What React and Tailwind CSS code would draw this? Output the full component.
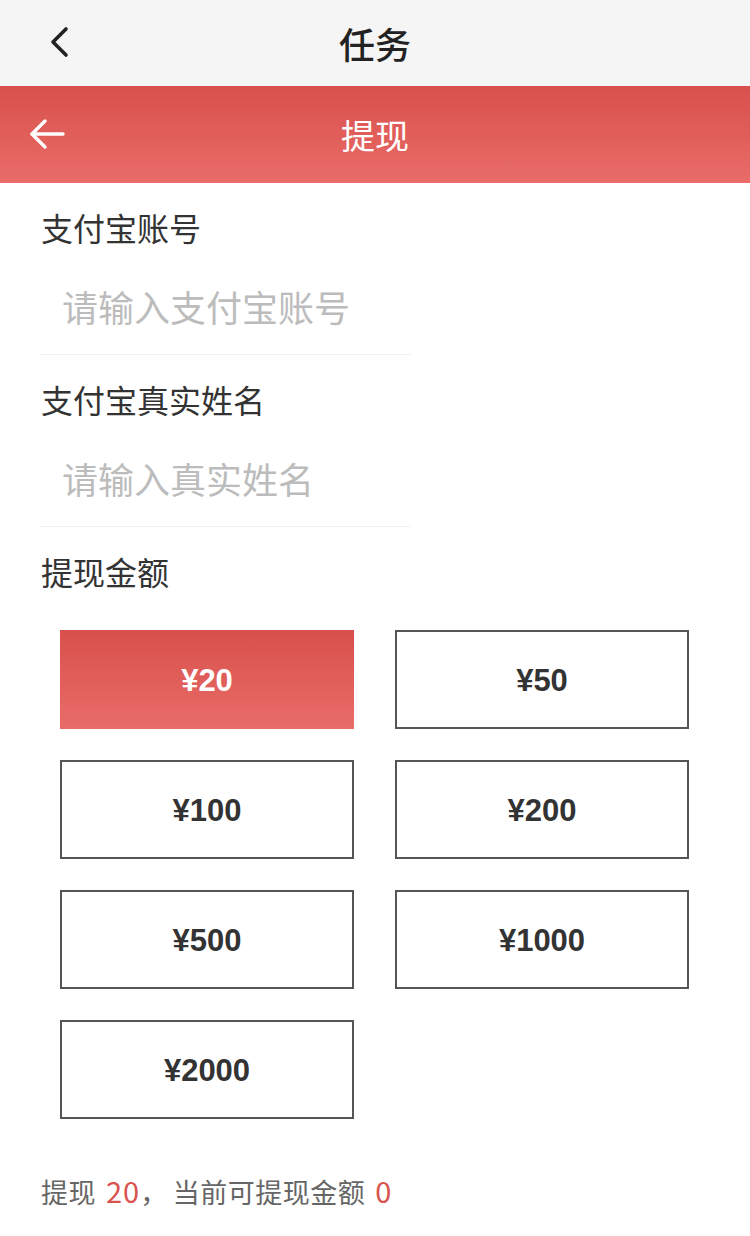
import React, { useState } from "react";

const FONT = { fontFamily: '"Noto Sans CJK SC", "Noto Sans", sans-serif' };
const AMOUNTS = [20, 50, 100, 200, 500, 1000, 2000];

function Field({ label, placeholder }) {
  return (
    <div className="w-[370px]">
      <div className="mt-[22px] h-[44px] text-[32px] leading-[44px] text-[#333]">{label}</div>
      <div className="h-[106px] pt-[35px] border-b border-[#f0f0f0]">
        <input
          placeholder={placeholder}
          className="w-full pl-[21px] h-[44px] text-[36px] leading-[44px] text-[#333] placeholder:text-[#bcbcbc] outline-none bg-transparent"
        />
      </div>
    </div>
  );
}

export default function App() {
  const [amount, setAmount] = useState(20);

  return (
    <div className="min-h-[1236px] w-[750px] bg-white" style={FONT}>
      {/* Top nav */}
      <div className="h-[86px] bg-[#f5f5f5] flex items-center relative">
        <svg className="absolute left-[48px] top-[26px]" width="22" height="32" viewBox="0 0 22 32">
          <polyline points="18,3 5,16 18,29" fill="none" stroke="#222" strokeWidth="3.6" strokeLinecap="round" strokeLinejoin="round" />
        </svg>
        <div className="flex-1 text-center text-[36px] font-medium leading-[82px] text-[#222]">任务</div>
      </div>

      {/* Red header */}
      <div className="h-[97px] bg-gradient-to-b from-[#d8504b] to-[#e96c69] flex items-center relative">
        <svg className="absolute left-[28px] top-[32px]" width="38" height="32" viewBox="0 0 38 32">
          <g fill="none" stroke="#fff" strokeWidth="3.4" strokeLinecap="round" strokeLinejoin="round">
            <line x1="4" y1="16" x2="35" y2="16" />
            <polyline points="17,3 4,16 17,29" />
          </g>
        </svg>
        <div className="flex-1 text-center text-[34px] text-white">提现</div>
      </div>

      {/* Form */}
      <div className="pl-[41px]">
        <Field label="支付宝账号" placeholder="请输入支付宝账号" />
        <Field label="支付宝真实姓名" placeholder="请输入真实姓名" />
        <div className="mt-[22px] h-[44px] text-[32px] leading-[44px] text-[#333]">提现金额</div>
      </div>

      {/* Amounts */}
      <div className="mt-[37px] ml-[60px] w-[629px] grid grid-cols-2 gap-x-[41px] gap-y-[31px]">
        {AMOUNTS.map((a) => {
          const active = a === amount;
          return (
            <button
              key={a}
              onClick={() => setAmount(a)}
              className={
                active
                  ? "h-[99px] pt-[4px] bg-gradient-to-b from-[#d8504b] to-[#e96c69] text-white font-bold text-[31px]"
                  : "h-[99px] pt-[4px] border-2 border-[#555] bg-white text-[#333] font-bold text-[31px]"
              }
              style={{ fontFamily: '"Liberation Sans", "Noto Sans CJK SC", sans-serif' }}
            >
              ¥{a}
            </button>
          );
        })}
      </div>

      {/* Footer note */}
      <div className="mt-[51px] pl-[41px] h-[40px] text-[27px] tracking-[0.5px] leading-[40px] text-[#666]">
        提现<span className="ml-[10px] text-[29px] tracking-[1px] text-[#d9534f]">{amount}</span>
        <span className="mr-[5px]">，</span>当前可提现金额
        <span className="ml-[10px] text-[29px] text-[#d9534f]">0</span>
      </div>
    </div>
  );
}
